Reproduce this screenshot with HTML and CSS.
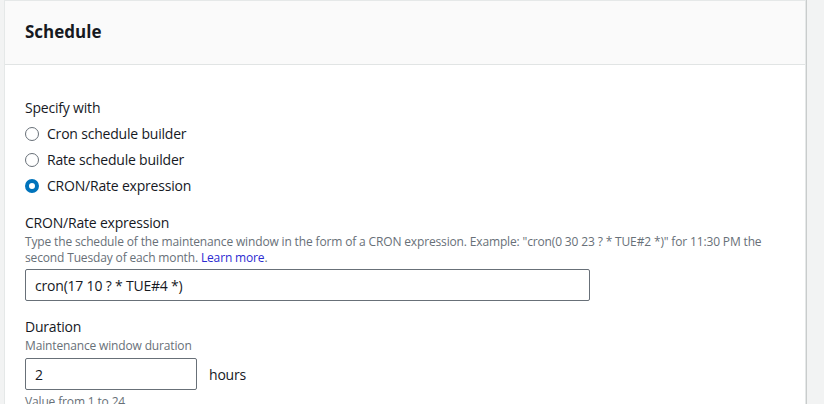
FILE: index.html
```html
<!DOCTYPE html>
<html lang="en">
<head>
<meta charset="utf-8">
<title>Schedule</title>
<link rel="stylesheet" href="styles.css">
</head>
<body>
<section class="card">
  <header class="card-header">
    <h2 class="card-title">Schedule</h2>
  </header>
  <div class="card-body">
    <fieldset class="field">
      <legend class="label">Specify with</legend>
      <div class="radio-group">
        <label class="radio-row"><span class="radio"></span><span>Cron schedule builder</span></label>
        <label class="radio-row"><span class="radio"></span><span>Rate schedule builder</span></label>
        <label class="radio-row"><span class="radio radio-checked"></span><span>CRON/Rate expression</span></label>
      </div>
    </fieldset>

    <div class="field field-cron">
      <div class="label">CRON/Rate expression</div>
      <div class="desc">Type the schedule of the maintenance window in the form of a CRON expression. Example: "cron(0 30 23 ? * TUE#2 *)" for 11:30 PM the second Tuesday of each month. <a class="link" href="#">Learn more</a>.</div>
      <div class="input input-wide">cron(17 10 ? * TUE#4 *)</div>
    </div>

    <div class="field field-duration">
      <div class="label">Duration</div>
      <div class="desc">Maintenance window duration</div>
      <div class="input-row">
        <div class="input input-short">2</div>
        <span class="unit">hours</span>
      </div>
      <div class="desc hint">Value from 1 to 24</div>
    </div>
  </div>
</section>
</body>
</html>
```

FILE: styles.css
```css
html, body {
  margin: 0;
  padding: 0;
}
body {
  background: #f2f3f3;
  font-family: "Open Sans", "Noto Sans", sans-serif;
  color: #16191f;
  font-size: 14px;
  letter-spacing: -0.2px;
  height: 404px;
  overflow: hidden;
}
.card {
  margin-left: 4px;
  width: 800px;
  background: #ffffff;
  border: 1px solid #e5e8e8;
  border-bottom: none;
  box-shadow: 1px 0 0 #c9cccc;
  min-height: 420px;
}
.card-header {
  background: #fafafa;
  height: 63px;
  border-bottom: 1px solid #e1e4e4;
  display: flex;
  align-items: center;
  padding: 0 20px;
}
.card-title {
  margin: 0;
  font-size: 17px;
  font-weight: 700;
  line-height: 22px;
  letter-spacing: 0;
  position: relative;
  top: -1px;
}
.card-body {
  padding: 32px 20px 0 20px;
}
.field {
  margin: 0;
  padding: 0;
  border: 0;
}
.label {
  font-size: 14px;
  line-height: 22px;
  padding: 0;
}
.radio-group {
  margin-top: 4px;
  display: flex;
  flex-direction: column;
  gap: 4px;
}
.radio-row {
  display: flex;
  align-items: center;
  gap: 8px;
  line-height: 22px;
  height: 22px;
}
.radio {
  box-sizing: border-box;
  width: 14px;
  height: 14px;
  border-radius: 50%;
  border: 1.5px solid #687078;
  background: #fff;
}
.radio-checked {
  border: 4px solid #0073bb;
}
.field-cron {
  margin-top: 15px;
}
.desc {
  font-size: 12px;
  line-height: 16px;
  color: #687078;
  letter-spacing: -0.15px;
}
.link {
  color: #2b2bd1;
  text-decoration: none;
}
.input {
  box-sizing: border-box;
  height: 32px;
  border: 1px solid #687078;
  border-radius: 2px;
  padding: 0 9px;
  display: flex;
  align-items: center;
  font-size: 14px;
  background: #fff;
}
.field-cron .input {
  margin-top: 3px;
}
.input-wide {
  width: 565px;
}
.field-duration {
  margin-top: 15px;
}
.input-row {
  margin-top: 4px;
  display: flex;
  align-items: center;
  gap: 12px;
}
.input-short {
  width: 172px;
}
.unit {
  font-size: 14px;
}
.hint {
  margin-top: 4px;
}
```
